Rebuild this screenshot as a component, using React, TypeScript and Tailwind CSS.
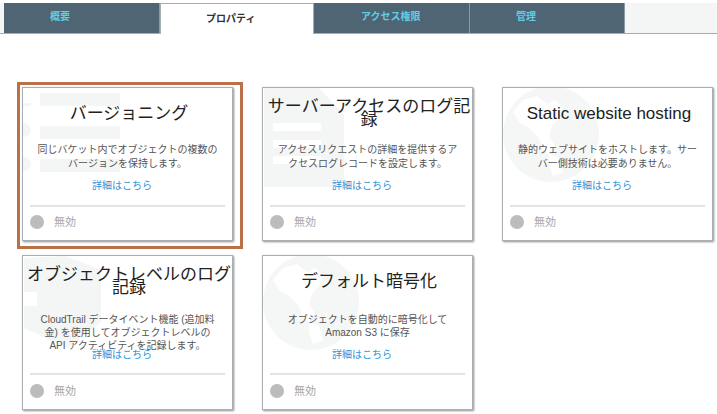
import type { ReactNode } from "react";

function ListMark() {
  return (
    <svg className="absolute left-0 top-0" width="120" height="110" viewBox="0 0 120 110" fill="#f4f6f6">
      <rect x="17" y="5" width="80" height="13" />
      <rect x="17" y="38" width="80" height="13" />
      <rect x="17" y="71" width="80" height="13" />
      <rect x="0" y="15" width="8" height="3" />
      <circle cx="1" cy="42" r="7" />
      <circle cx="1" cy="76" r="7" />
    </svg>
  );
}

function DocMark() {
  return (
    <svg className="absolute left-0 top-0" width="120" height="110" viewBox="0 0 120 110" fill="#f4f6f6">
      <path
        fillRule="evenodd"
        d="M1 0H56L81 27V99H1ZM10 35V43H58V35ZM10 52V60H58V52ZM10 68V76H58V68Z"
      />
    </svg>
  );
}

function GlobeMark() {
  return (
    <svg className="absolute left-0 top-0" width="120" height="110" viewBox="0 0 120 110">
      <circle cx="48" cy="46" r="48" fill="#f5f7f6" />
      <path
        fill="#ffffff"
        d="M10 24L20 12L34 8L44 16L52 12L60 20L56 30L50 36L46 48L52 58L46 66L40 62L36 50L26 40L16 34Z"
      />
      <path fill="#ffffff" d="M46 66L56 70L60 84L50 88L46 76Z" />
    </svg>
  );
}

function HexMark() {
  return (
    <svg className="absolute left-0 top-0" width="120" height="110" viewBox="0 0 120 110" fill="#f4f6f6">
      <path d="M1 2L42 0L78 14V66L44 92L1 72Z" />
      <rect x="0" y="36" width="14" height="14" fill="#ffffff" />
    </svg>
  );
}

type CardProps = {
  title: string;
  lines: string[];
  mark: ReactNode;
  lower?: boolean;
  selected?: boolean;
};

function Card({ title, lines, mark, lower, selected }: CardProps) {
  return (
    <div
      className={
        lower
          ? "relative h-[155px] w-[211px] border border-[#a9aeb0] bg-white shadow-[1px_1px_2px_rgba(0,0,0,0.45)]"
          : "relative h-[154px] w-[211px] border border-[#a9aeb0] bg-white shadow-[1px_1px_2px_rgba(0,0,0,0.45)]"
      }
    >
      {selected && (
        <div className="absolute -left-[6px] -top-[6px] -right-[11px] -bottom-[9px] border-[3px] border-[#bb7148]" />
      )}
      <div className="absolute inset-0 overflow-hidden">{mark}</div>
      <div className="relative flex h-full flex-col">
        <h2 className="flex h-[50px] items-center justify-center pl-[3px] text-center text-[17px] leading-[13px] font-normal text-[#222]">
          <span className="block w-[206px]">{title}</span>
        </h2>
        <div
          className={
            lower
              ? "mx-auto mt-[7px] h-[35px] w-[180px] text-center text-[10px] leading-[13px] text-[#555]"
              : "mx-auto mt-[5px] h-[36px] w-[180px] text-center text-[10px] leading-[14px] text-[#555]"
          }
        >
          {lines.map((l) => (
            <div key={l} className="whitespace-nowrap">{l}</div>
          ))}
        </div>
        <a className="pr-[11px] text-center text-[10px] leading-[14px] text-[#2b93d8]">詳細はこちら</a>
        <div className={lower ? "mx-[7px] mt-[11px] h-[2px] bg-[#e3e4e4]" : "mx-[7px] mt-[12px] h-[2px] bg-[#e3e4e4]"} />
        <div className={lower ? "mt-[8px] flex items-center pl-[7px]" : "mt-[7px] flex items-center pl-[7px]"}>
          <span className="h-[14px] w-[14px] rounded-full bg-[#bcbcbc]" />
          <span className="ml-[10px] text-[11px] leading-[16px] text-[#a8a8a8]">無効</span>
        </div>
      </div>
    </div>
  );
}

const tabs = [
  { label: "概要", active: false, cls: "w-[156px] pl-[46px]" },
  { label: "プロパティ", active: true, cls: "" },
  { label: "アクセス権限", active: false, cls: "w-[156px] pl-[47px]" },
  { label: "管理", active: false, cls: "w-[155px] pl-[46px]" },
];

export default function App() {
  return (
    <div className="h-[414px] w-[717px] overflow-hidden bg-white font-['Liberation_Sans','Noto_Sans_CJK_JP',sans-serif]">
      <div className="mt-[3px] flex h-[31px] border-b border-[#a4adb2] bg-[#f4f6f6] pl-[4px]">
        {tabs.map((t) =>
          t.active ? (
            <div
              key={t.label}
              className="-mb-px flex h-[31px] w-[154px] items-start border border-b-0 border-[#a4adb2] bg-white pl-[45px] pt-[8px] text-[10px] leading-[14px] font-bold text-[#333]"
            >
              {t.label}
            </div>
          ) : (
            <div
              key={t.label}
              className={`flex h-[30px] items-start border-r border-[#8b9ba5] bg-[#4f6573] pt-[7px] text-[10px] leading-[14px] font-bold text-[#5fcde8] ${t.cls}`}
            >
              {t.label}
            </div>
          ),
        )}
      </div>
      <div className="grid grid-cols-[211px_211px_211px] gap-x-[29px] gap-y-[14px] pl-[22px] pt-[53px]">
        <Card
          selected
          title="バージョニング"
          lines={["同じバケット内でオブジェクトの複数の", "バージョンを保持します。"]}
          mark={<ListMark />}
        />
        <Card
          title="サーバーアクセスのログ記録"
          lines={["アクセスリクエストの詳細を提供するア", "クセスログレコードを設定します。"]}
          mark={<DocMark />}
        />
        <Card
          title="Static website hosting"
          lines={["静的ウェブサイトをホストします。サー", "バー側技術は必要ありません。"]}
          mark={<GlobeMark />}
        />
        <Card
          lower
          title="オブジェクトレベルのログ記録"
          lines={["CloudTrail データイベント機能 (追加料", "金) を使用してオブジェクトレベルの", "API アクティビティを記録します。"]}
          mark={<HexMark />}
        />
        <Card
          lower
          title="デフォルト暗号化"
          lines={["オブジェクトを自動的に暗号化して", "Amazon S3 に保存"]}
          mark={<GlobeMark />}
        />
      </div>
    </div>
  );
}
